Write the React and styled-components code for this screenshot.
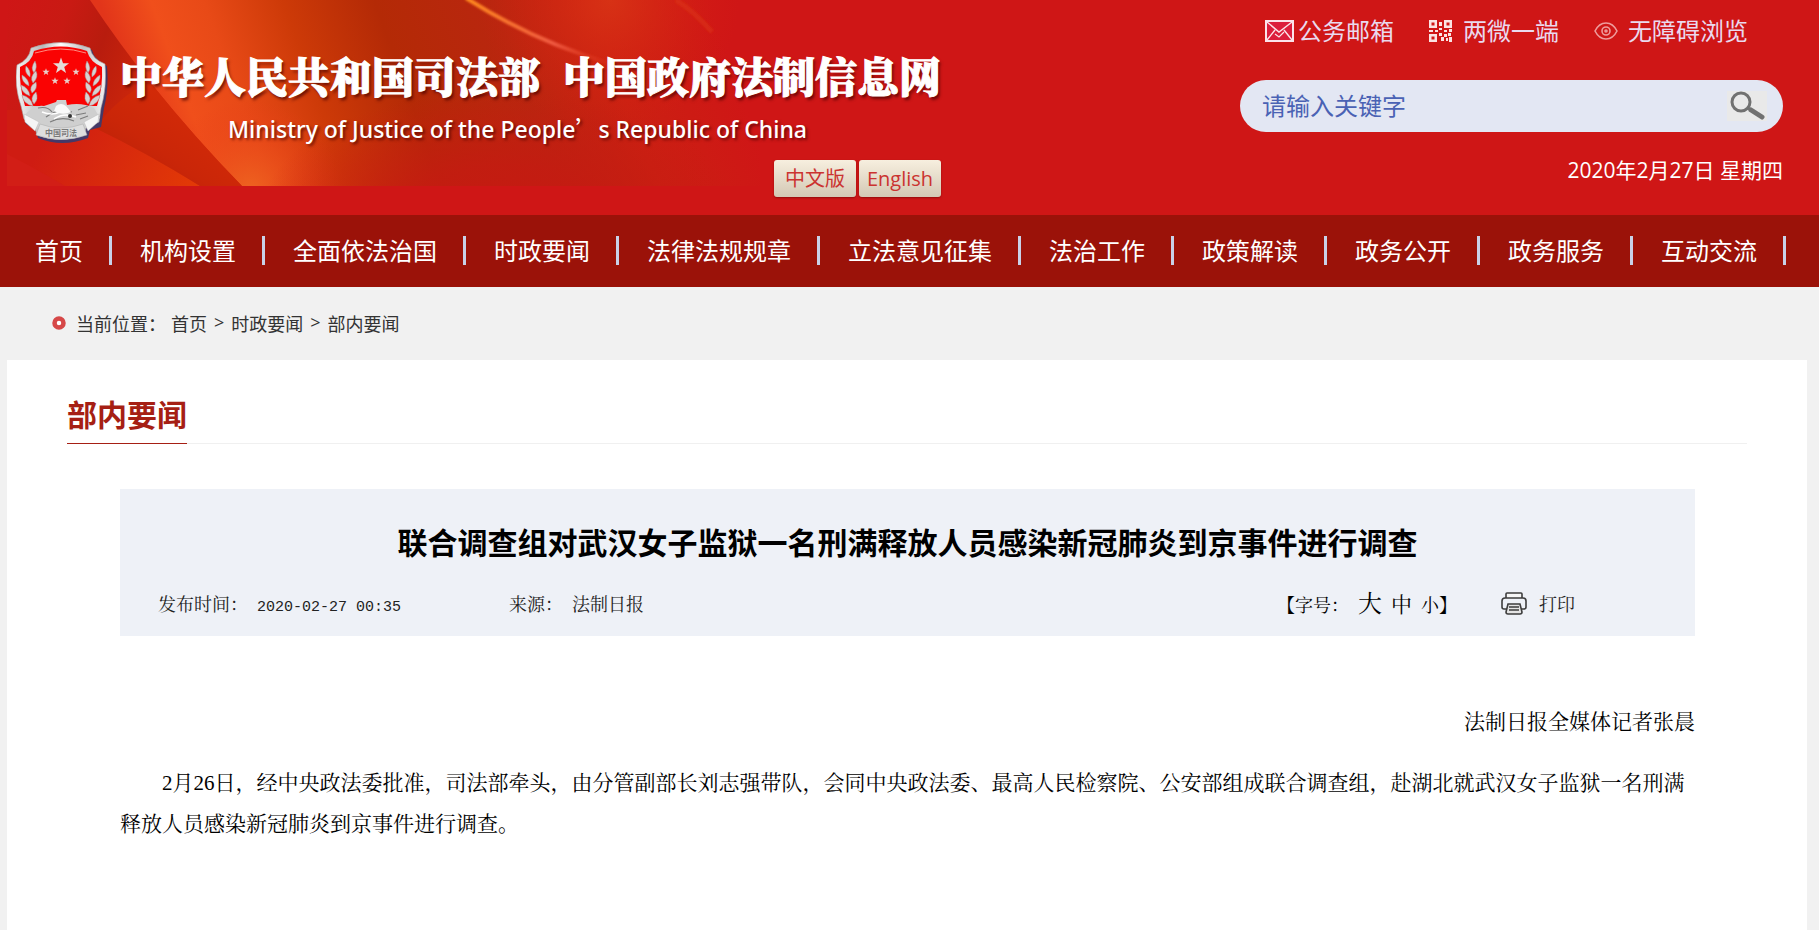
import styled, { createGlobalStyle } from 'styled-components'
import { useState } from 'react'

const FONT = {
    sans: '"Open Sans", "Noto Sans CJK SC", sans-serif',
    latin: '"Noto Sans", "Noto Sans CJK SC", sans-serif',
    cjk: '"Noto Sans CJK SC", sans-serif',
    serif: '"SimSun", "Noto Serif CJK SC", "Noto Sans CJK SC", serif',
    body: '"Liberation Serif", "Noto Serif CJK SC", "Noto Sans CJK SC", serif',
    mono: '"Liberation Mono", "Noto Sans CJK SC", monospace',
}

const COLOR = {
    red: '#cf1616',
    nav: '#9b1209',
    title: '#a61f14',
    grey: '#f1f1f1',
    pale: '#eef1f7',
}

const NAV_ITEMS = [
    '首页', '机构设置', '全面依法治国', '时政要闻', '法律法规规章', '立法意见征集',
    '法治工作', '政策解读', '政务公开', '政务服务', '互动交流',
]

const CRUMBS = ['首页', '时政要闻', '部内要闻']

const GlobalStyle = createGlobalStyle`
    * {
        box-sizing: border-box;
    }

    body {
        margin: 0;
        background-color: ${COLOR.grey};
        font-family: ${FONT.sans};
        color: #333;
    }

    h1, h2, p, ul, ol {
        margin: 0;
        padding: 0;
        font-weight: normal;
        list-style: none;
    }

    a {
        color: inherit;
        text-decoration: none;
    }

    button {
        border: none;
        padding: 0;
        background: none;
        color: inherit;
        font-family: inherit;
        cursor: pointer;
    }
`

const Page = styled.div`
    display: flex;
    flex-direction: column;
    min-height: 100vh;
`

const Header = styled.header`
    position: relative;
    display: flex;
    justify-content: space-between;
    gap: 40px;
    padding: 0 36px 0 16px;
    min-height: 215px;
    background-color: ${COLOR.red};
`

const Backdrop = styled.svg`
    position: absolute;
    left: 0;
    top: 0;
`

const Brand = styled.div`
    position: relative;
    display: flex;
    align-items: flex-start;
    gap: 12px;
    padding-top: 42px;
    color: white;
`

const BrandText = styled.div`
    display: flex;
    flex-direction: column;
`

const SiteName = styled.h1`
    display: flex;
    gap: 23px;
    font-family: ${FONT.serif};
    font-size: 42px;
    line-height: 66px;
    font-weight: 900;
    white-space: nowrap;
    -webkit-text-stroke: 1px white;
    text-shadow: 2px 3px 3px rgba(70,0,0,0.7);
`

const SiteNameEn = styled.p`
    padding-left: 108px;
    font-family: ${FONT.latin};
    font-size: 23px;
    line-height: 42px;
    font-weight: 500;
    white-space: nowrap;
    text-shadow: 2px 2px 3px rgba(70,0,0,0.7);
`

const Apostrophe = styled.span`
    font-family: ${FONT.cjk};
    line-height: 24px;
`

const Languages = styled.div`
    display: flex;
    justify-content: flex-end;
    gap: 3px;
    padding-top: 10px;
`

const Language = styled.a`
    width: 82px;
    border-radius: 3px;
    background: linear-gradient(#f7efdf, #d3c8b4);
    box-shadow: 0 1px 2px rgba(90,0,0,0.5);
    color: #cb3330;
    font-size: 20px;
    line-height: 37px;
    text-align: center;
`

const Tools = styled.div`
    position: relative;
    display: flex;
    flex-direction: column;
    flex: 0 1 543px;
    padding-top: 13px;
`

const QuickLinks = styled.ul`
    display: flex;
    justify-content: flex-end;
    gap: 35px;
    padding-right: 35px;
`

const QuickLink = styled.a`
    display: flex;
    align-items: center;
    gap: ${props => props.$gap}px;
    color: #ead9ee;
    font-size: 24px;
    line-height: 36px;
    white-space: nowrap;
`

const SearchForm = styled.form`
    display: flex;
    align-items: center;
    height: 52px;
    margin-top: 31px;
    padding: 0 16px 0 22px;
    border-radius: 26px;
    background-color: #e3e7f3;
`

const SearchInput = styled.input`
    flex: 1;
    min-width: 0;
    border: none;
    outline: none;
    padding: 0;
    background: transparent;
    color: #4a62b4;
    font-family: ${FONT.sans};
    font-size: 24px;
    line-height: 36px;

    &::placeholder {
        color: #4a62b4;
        opacity: 1;
    }
`

const SearchButton = styled.button`
    display: flex;
    width: 40px;
    height: 30px;
    background-color: #e9e9e9;
`

const Today = styled.p`
    margin-top: 20px;
    color: white;
    font-size: 21px;
    line-height: 36px;
    text-align: right;
`

const NavList = styled.ul`
    display: flex;
    flex-wrap: wrap;
    padding: 21px 7px 22px;
    background-color: ${COLOR.nav};
`

const NavLink = styled.a`
    display: block;
    padding: 0 26px 0 28px;
    border-right: 3px solid #c9d1e8;
    color: white;
    font-size: 24px;
    line-height: 29px;
`

const Breadcrumb = styled.nav`
    display: flex;
    align-items: center;
    gap: 10px;
    padding: 0 52px 1px;
    height: 73px;
    font-size: 18px;
`

const CrumbList = styled.ol`
    display: flex;
    gap: 7px;
    margin-left: -5px;
`

const Crumb = styled.li`
    display: flex;
    gap: 7px;

    & + &::before {
        content: '>';
    }
`

const Panel = styled.main`
    flex: 1;
    margin: 0 12px 0 7px;
    padding: 28px 60px 60px;
    background-color: white;
`

const SectionBar = styled.div`
    display: flex;
    border-bottom: 1px solid #f0f0f0;
`

const SectionTitle = styled.h2`
    margin-bottom: -1px;
    padding-bottom: 1px;
    border-bottom: 1px solid ${COLOR.title};
    color: ${COLOR.title};
    font-size: 30px;
    line-height: 54px;
    font-weight: bold;
`

const Article = styled.article`
    margin: 45px 52px 0 53px;
    color: black;
    font-family: ${FONT.serif};
`

const ArticleHeader = styled.div`
    padding: 33px 0 21px;
    background-color: ${COLOR.pale};
`

const ArticleTitle = styled.h1`
    font-family: ${FONT.sans};
    font-size: 30px;
    line-height: 42px;
    font-weight: bold;
    text-align: center;
`

const Meta = styled.div`
    display: flex;
    align-items: center;
    height: 24px;
    padding: 0 120px 0 38px;
    margin-top: 27px;
    color: #222;
    font-size: 18px;
    line-height: 24px;
`

const MetaItem = styled.div`
    display: flex;
    align-items: baseline;
    gap: 9px;
    margin-right: 108px;
`

const PublishTime = styled.time`
    font-family: ${FONT.mono};
    font-size: 15px;
    line-height: 16px;
`

const FontSizes = styled.div`
    display: flex;
    align-items: baseline;
    gap: 9px;
    margin-left: auto;
    margin-right: 44px;
    color: black;
`

const SizeButton = styled.button`
    font-size: ${props => props.$size}px;
    line-height: 24px;
`

const PrintButton = styled.button`
    display: flex;
    align-items: center;
    gap: 12px;
    font-size: 18px;
    line-height: 24px;
`

const ArticleBody = styled.div`
    padding-top: 66px;
    font-family: ${FONT.body};
    font-size: 21px;
    line-height: 41px;
`

const Byline = styled.p`
    margin-bottom: 20px;
    text-align: right;
`

const Paragraph = styled.p`
    text-indent: 2em;
`

const HeaderArt = () => (
    <Backdrop width="760" height="186" viewBox="0 0 760 186" aria-hidden="true">
        <defs>
            <linearGradient id="sheet" x1="120" y1="60" x2="700" y2="-150" gradientUnits="userSpaceOnUse">
                <stop offset="0" stopColor="#e2351a" />
                <stop offset="0.08" stopColor="#f04f1b" />
                <stop offset="0.16" stopColor="#e84a17" />
                <stop offset="0.28" stopColor="#cd3a08" />
                <stop offset="0.42" stopColor="#b42a06" />
                <stop offset="0.6" stopColor="#b9260f" />
                <stop offset="0.75" stopColor="#cb2012" />
                <stop offset="0.93" stopColor={COLOR.red} />
            </linearGradient>
            <linearGradient id="fold" x1="7" y1="0" x2="170" y2="60" gradientUnits="userSpaceOnUse">
                <stop offset="0" stopColor={COLOR.red} />
                <stop offset="0.35" stopColor="#c91a13" />
                <stop offset="0.6" stopColor="#b81c0e" />
                <stop offset="1" stopColor="#d32a0a" />
            </linearGradient>
            <linearGradient id="petal" x1="60" y1="110" x2="200" y2="186" gradientUnits="userSpaceOnUse">
                <stop offset="0" stopColor="#cf1c12" />
                <stop offset="1" stopColor="#e33a06" />
            </linearGradient>
            <linearGradient id="shade" x1="170" y1="100" x2="125" y2="165" gradientUnits="userSpaceOnUse">
                <stop offset="0" stopColor="#d22a08" />
                <stop offset="0.6" stopColor="#ca2608" />
                <stop offset="1" stopColor="#bf2208" />
            </linearGradient>
            <radialGradient id="flareLow" cx="250" cy="190" r="90" gradientUnits="userSpaceOnUse">
                <stop offset="0" stopColor="#ee6420" />
                <stop offset="1" stopColor="#e83818" stopOpacity="0" />
            </radialGradient>
            <radialGradient id="glow" cx="610" cy="0" r="130" gradientUnits="userSpaceOnUse">
                <stop offset="0" stopColor="#dc3a16" stopOpacity="0.7" />
                <stop offset="1" stopColor="#d82010" stopOpacity="0" />
            </radialGradient>
            <radialGradient id="foot" cx="0" cy="0" r="1" gradientUnits="userSpaceOnUse" gradientTransform="translate(500 215) scale(240 125)">
                <stop offset="0" stopColor="#c51a12" />
                <stop offset="0.4" stopColor="#c51a12" stopOpacity="0.8" />
                <stop offset="1" stopColor="#c51a12" stopOpacity="0" />
            </radialGradient>
            <linearGradient id="arc" x1="465" y1="0" x2="615" y2="65" gradientUnits="userSpaceOnUse">
                <stop offset="0" stopColor="#ff8a1e" />
                <stop offset="0.6" stopColor="#f05a42" />
                <stop offset="1" stopColor="#e63a1c" stopOpacity="0" />
            </linearGradient>
            <filter id="soft" x="-10%" y="-20%" width="120%" height="140%">
                <feGaussianBlur stdDeviation="1" />
            </filter>
        </defs>
        <rect x="7" width="753" height="186" fill="url(#sheet)" />
        <rect x="90" width="400" height="186" fill="url(#flareLow)" />
        <rect x="240" width="520" height="186" fill="url(#foot)" />
        <rect x="400" width="360" height="186" fill="url(#glow)" />
        <path d="M7 0H90Q120 45 150 82Q195 138 242 186H7Z" fill="url(#fold)" />
        <path d="M60 110Q125 135 200 186H7V110Z" fill="url(#petal)" />
        <path d="M95 128Q145 152 200 186H242Q195 138 150 82Q120 95 95 128Z" fill="url(#shade)" />
        <path d="M7 154Q35 168 65 186H7Z" fill="#d21e16" />
        <path d="M466 -2Q535 42 612 64" fill="none" stroke="url(#arc)" strokeWidth="4" filter="url(#soft)" />
        <path d="M676 0Q695 12 712 32" fill="none" stroke="#e04014" strokeOpacity="0.4" strokeWidth="5" filter="url(#soft)" />
    </Backdrop>
)

const STAR = 'M0 -10L2.4 -3.1L9.5 -3.1L3.8 1.2L5.9 8.1L0 4L-5.9 8.1L-3.8 1.2L-9.5 -3.1L-2.4 -3.1Z'

const SMALL_STARS = [[30, 30], [60, 30], [39, 39], [51, 39]]

// 麦穗叶片，右侧镜像复用
const Wheat = () => (
    <g fill="#d6d2d2" stroke="#a88c8c" strokeWidth="0.5">
        <path d="M19 19q3 6 -1 12q-4 -5 1 -12z" />
        <path d="M10 24q5 4 4 11q-6 -4 -4 -11z" />
        <path d="M20 29q3 6 -3 12q-4 -6 3 -12z" />
        <path d="M6 33q7 4 7 11q-8 -4 -7 -11z" />
        <path d="M20 40q2 7 -4 11q-4 -6 4 -11z" />
        <path d="M5 43q8 3 9 11q-9 -3 -9 -11z" />
        <path d="M20 50q3 7 -2 12q-5 -6 2 -12z" />
        <path d="M6 53q9 2 11 11q-10 -2 -11 -11z" />
    </g>
)

const Emblem = () => (
    <svg width="92" height="102" viewBox="0 0 92 102" role="img" aria-label="中国司法">
        <defs>
            <linearGradient id="silver" x1="0" y1="0" x2="1" y2="0">
                <stop offset="0" stopColor="#f4f4f4" />
                <stop offset="0.3" stopColor="#b9b9b9" />
                <stop offset="0.5" stopColor="#fff" />
                <stop offset="0.75" stopColor="#c4c4c4" />
                <stop offset="1" stopColor="#f2f2f2" />
            </linearGradient>
        </defs>
        <path d="M17 8Q46 -4 76 8Q78 18 91 24Q93 46 88 66L85 85L74 88L72 96Q46 106 22 96L20 88L10 82L6 66Q-1 46 2 25Q14 20 17 8Z" fill="#2c3d78" opacity="0.85" />
        <path d="M15 6Q45 -5 74 6Q76 17 89 22Q91 46 85 66L83 80L70 86L68 93Q45 102 21 93L19 86L8 77L5 64Q-2 44 1 23Q13 18 15 6Z" fill="url(#silver)" stroke="#a8a0a0" strokeWidth="0.6" />
        <path d="M18 9Q45 0 71 9Q74 20 86 25Q87 46 81 64H9Q3 44 4 25Q16 20 18 9Z" fill="#fa0303" />
        <path d="M19 11Q45 3 70 11" fill="none" stroke="#ff8a80" strokeWidth="1" />
        <path d={STAR} transform="translate(45 24) scale(0.85)" fill="#e4dcd8" />
        {SMALL_STARS.map(([x, y]) => (
            <path key={`${x}-${y}`} d={STAR} transform={`translate(${x} ${y}) scale(0.38)`} fill="#e9cfca" />
        ))}
        <Wheat />
        <g transform="translate(90 0) scale(-1 1)"><Wheat /></g>
        <path d="M8 74Q18 62 28 64L40 60L41 58H50L51 63Q66 60 78 66L84 76L70 86Q45 95 21 86Z" fill="#cfcfcf" />
        <path d="M22 66Q32 64 36 70M30 75Q42 66 56 70M34 80Q46 74 58 79M62 68L72 64M60 73L70 71M64 77L72 74" fill="none" stroke="#7d7d7d" strokeWidth="1.2" />
        <path d="M26 70Q36 74 44 70M38 77Q48 70 60 75" fill="none" stroke="#fff" strokeWidth="1.5" />
        <path d="M40 64Q45 60 50 64L55 70Q46 74 38 69Z" fill="#fafafa" />
        <circle cx="54" cy="74" r="2" fill="#333" />
        <path d="M8 72L23 80L19 89L9 80ZM83 72L68 80L72 89L82 80Z" fill="#f5f5f5" stroke="#bbb" strokeWidth="0.5" />
        <path d="M24 82Q45 90 67 82L71 93Q45 102 20 93Z" fill="#dedede" stroke="#aaa" strokeWidth="0.5" />
        <text x="45" y="94" textAnchor="middle" fontFamily={FONT.cjk} fontSize="8" fontWeight="700" fill="#7a7a7a">中国司法</text>
    </svg>
)

const MailIcon = () => (
    <svg width="29" height="22" viewBox="0 0 29 22" fill="none" stroke="#fbe3ea" aria-hidden="true">
        <rect x="1" y="1" width="27" height="20" strokeWidth="2" fill="#dc1d3c" />
        <path d="M2 2L14 12L27 2M2 20L10 10M27 20L19 10" strokeWidth="1.4" />
        <path d="M10 14L14 17L19 12" strokeWidth="1.2" />
    </svg>
)

const QrIcon = () => (
    <svg width="23" height="22" viewBox="0 0 23 22" fill="#fbe3e3" aria-hidden="true">
        <path fillRule="evenodd" d="M0 0h8v8H0zM2.500 2.500v3h3v-3zM15 0h8v8h-8zM17.500 2.500v3h3v-3zM0 14h8v8H0zM2.500 16.500v3h3v-3z" />
        <path d="M10 2h3v4h-3zM10 8h3v2h-3zM0 10h4v2H0zM6 10h3v2H6zM15 10h3v2h-3zM20 9h3v3h-3zM10 13h3v3h-3zM12 17h3v4h-3zM15 14h3v3h-3zM19 13h3v3h-3zM17 18h2v3h-2zM20 17h3v5h-3z" />
    </svg>
)

const EyeIcon = () => (
    <svg width="24" height="18" viewBox="0 0 24 18" fill="none" stroke="#ee9c9c" strokeWidth="1.600" aria-hidden="true">
        <path d="M1 9Q5 1 12 1T23 9Q19 17 12 17T1 9Z" />
        <circle cx="12" cy="9" r="4" />
        <circle cx="12" cy="9" r="1" />
    </svg>
)

const SearchIcon = () => (
    <svg width="40" height="30" viewBox="0 0 40 30" fill="none" stroke="#717171" aria-hidden="true">
        <circle cx="14" cy="11" r="9" strokeWidth="3" />
        <path d="M21 17L24 19" strokeWidth="3" />
        <path d="M24 19L35 26" strokeWidth="5" strokeLinecap="round" />
    </svg>
)

const BulletIcon = () => (
    <svg width="14" height="14" viewBox="0 0 14 14" fill="none" aria-hidden="true">
        <circle cx="7" cy="7" r="4.500" stroke="#d64848" strokeWidth="4.500" fill="white" />
    </svg>
)

const PrinterIcon = () => (
    <svg width="26" height="23" viewBox="0 0 26 23" fill="none" stroke="#3d3d3d" strokeWidth="1.600" aria-hidden="true">
        <path d="M5 6V2Q5 1 6 1H20Q21 1 21 2V6" fill="#f6f6f6" />
        <path d="M6 17H3Q1 17 1 15V9Q1 6 4 6H22Q25 6 25 9V15Q25 17 23 17H20" />
        <path d="M7 12H19L21 20Q21 22 19 22H7Q5 22 5 20Z" fill="#e4e4e4" />
        <path d="M8 15H18M8 18H18" />
    </svg>
)

const QUICK_LINKS = [
    { text: '公务邮箱', icon: <MailIcon />, gap: 4 },
    { text: '两微一端', icon: <QrIcon />, gap: 11 },
    { text: '无障碍浏览', icon: <EyeIcon />, gap: 10 },
]

const SIZES = [
    { text: '大', size: 24 },
    { text: '中', size: 21 },
    { text: '小】', size: 18 },
]

const App = () => {
    let [keyword, setKeyword] = useState('')
    let [bodySize, setBodySize] = useState(null)

    const handleSearch = (event) => {
        event.preventDefault()
    }

    return (
        <Page lang="zh-CN">
            <GlobalStyle />
            <Header>
                <HeaderArt />
                <Brand>
                    <Emblem />
                    <BrandText>
                        <SiteName><span>中华人民共和国司法部</span><span>中国政府法制信息网</span></SiteName>
                        <SiteNameEn>Ministry of Justice of the People<Apostrophe>’</Apostrophe>s Republic of China</SiteNameEn>
                        <Languages>
                            <Language href="#cn">中文版</Language>
                            <Language href="#en">English</Language>
                        </Languages>
                    </BrandText>
                </Brand>
                <Tools>
                    <QuickLinks>
                        {QUICK_LINKS.map(link => (
                            <li key={link.text}>
                                <QuickLink href="#" $gap={link.gap}>{link.icon}{link.text}</QuickLink>
                            </li>
                        ))}
                    </QuickLinks>
                    <SearchForm onSubmit={handleSearch}>
                        <SearchInput
                            aria-label="请输入关键字"
                            placeholder="请输入关键字"
                            value={keyword}
                            onChange={e => setKeyword(e.target.value)} />
                        <SearchButton type="submit" aria-label="搜索"><SearchIcon /></SearchButton>
                    </SearchForm>
                    <Today>2020年2月27日 星期四</Today>
                </Tools>
            </Header>
            <nav>
                <NavList>
                    {NAV_ITEMS.map(item => (
                        <li key={item}><NavLink href="#">{item}</NavLink></li>
                    ))}
                </NavList>
            </nav>
            <Breadcrumb>
                <BulletIcon />
                <span>当前位置：</span>
                <CrumbList>
                    {CRUMBS.map(crumb => (
                        <Crumb key={crumb}><a href="#">{crumb}</a></Crumb>
                    ))}
                </CrumbList>
            </Breadcrumb>
            <Panel>
                <SectionBar>
                    <SectionTitle>部内要闻</SectionTitle>
                </SectionBar>
                <Article>
                    <ArticleHeader>
                        <ArticleTitle>联合调查组对武汉女子监狱一名刑满释放人员感染新冠肺炎到京事件进行调查</ArticleTitle>
                        <Meta>
                            <MetaItem>
                                <span>发布时间：</span>
                                <PublishTime>2020-02-27 00:35</PublishTime>
                            </MetaItem>
                            <MetaItem>
                                <span>来源：</span>
                                <span>法制日报</span>
                            </MetaItem>
                            <FontSizes>
                                <span>【字号：</span>
                                {SIZES.map(s => (
                                    <SizeButton key={s.text} type="button" $size={s.size} onClick={() => setBodySize(s.size)}>{s.text}</SizeButton>
                                ))}
                            </FontSizes>
                            <PrintButton type="button" onClick={() => window.print()}><PrinterIcon />打印</PrintButton>
                        </Meta>
                    </ArticleHeader>
                    <ArticleBody style={bodySize ? { fontSize: bodySize } : undefined}>
                        <Byline>法制日报全媒体记者张晨</Byline>
                        <Paragraph>2月26日，经中央政法委批准，司法部牵头，由分管副部长刘志强带队，会同中央政法委、最高人民检察院、公安部组成联合调查组，赴湖北就武汉女子监狱一名刑满释放人员感染新冠肺炎到京事件进行调查。</Paragraph>
                    </ArticleBody>
                </Article>
            </Panel>
        </Page>
    )
}

export default App
